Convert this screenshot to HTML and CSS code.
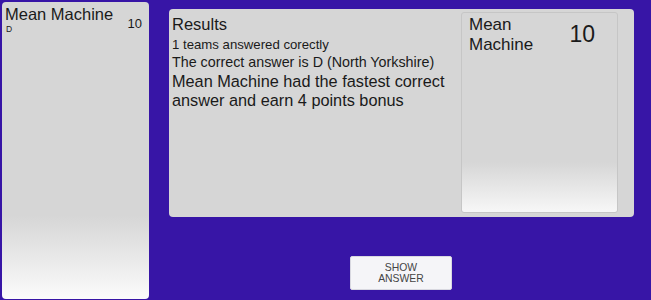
FILE: index.html
```html
<!DOCTYPE html>
<html>
<head>
<meta charset="utf-8">
<link rel="stylesheet" href="styles.css">
</head>
<body>
<div class="page">
  <div class="team-panel">
    <div class="team-row">
      <div class="team-info">
        <div class="team-name">Mean Machine</div>
        <div class="team-answer">D</div>
      </div>
      <div class="team-score">10</div>
    </div>
  </div>
  <div class="right">
    <div class="results-panel">
      <div class="results-text">
        <div class="results-title">Results</div>
        <div class="results-count">1 teams answered corectly</div>
        <div class="results-answer">The correct answer is D (North Yorkshire)</div>
        <div class="results-bonus">Mean Machine had the fastest correct answer and earn 4 points bonus</div>
      </div>
      <div class="score-card">
        <div class="card-name">Mean Machine</div>
        <div class="card-score">10</div>
      </div>
    </div>
    <div class="actions">
      <button class="show-btn">SHOW<br>ANSWER</button>
    </div>
  </div>
</div>
</body>
</html>
```
FILE: styles.css
```css
html, body {
  margin: 0;
  padding: 0;
}
body {
  background: #3715a6;
  width: 651px;
  height: 300px;
  overflow: hidden;
  font-family: "Liberation Sans", Arial, sans-serif;
  color: #1a1a1a;
}
.page {
  display: flex;
  align-items: flex-start;
}
.team-panel {
  margin: 2px 0 0 2px;
  width: 147px;
  height: 297px;
  box-sizing: border-box;
  border-radius: 4px;
  background: linear-gradient(to bottom, #d6d6d6 0%, #d6d6d6 72%, #fbfbfb 100%);
  padding: 3px 7px 0 3px;
}
.team-row {
  display: flex;
  justify-content: space-between;
}
.team-name {
  font-size: 16.5px;
  line-height: 19px;
}
.team-answer {
  font-size: 8.5px;
  line-height: 10px;
  margin-left: 1px;
}
.team-score {
  font-size: 13px;
  line-height: 15px;
  margin-top: 11px;
}
.right {
  margin-left: 20px;
  display: flex;
  flex-direction: column;
}
.results-panel {
  margin-top: 9px;
  width: 465px;
  height: 208px;
  box-sizing: border-box;
  background: #d6d6d6;
  border-radius: 4px;
  display: flex;
  padding: 3px 16px 4px 3px;
}
.results-text {
  flex: 1;
  padding-top: 3px;
}
.results-title {
  font-size: 16.5px;
  line-height: 19px;
}
.results-count {
  font-size: 13.2px;
  line-height: 15px;
  margin-top: 3px;
}
.results-answer {
  font-size: 14.3px;
  line-height: 17px;
  margin-top: 2px;
}
.results-bonus {
  font-size: 16.3px;
  line-height: 19px;
  margin-top: 1px;
  width: 285px;
}
.score-card {
  width: 157px;
  box-sizing: border-box;
  border: 1px solid #c6c6c6;
  border-radius: 3px;
  background: linear-gradient(to bottom, #d6d6d6 0%, #d6d6d6 75%, #f7f7f7 100%);
  display: flex;
  justify-content: space-between;
  padding: 2px 22px 0 7px;
}
.card-name {
  font-size: 17px;
  line-height: 20px;
  width: 70px;
}
.card-score {
  font-size: 23px;
  line-height: 26px;
  margin-top: 6px;
}
.actions {
  margin-top: 39px;
  padding-left: 181px;
}
.show-btn {
  width: 102px;
  height: 34px;
  box-sizing: border-box;
  background: #f5f5f8;
  border: 1px solid #d8d8e0;
  border-radius: 2px;
  font-family: "Liberation Sans", Arial, sans-serif;
  font-size: 10.4px;
  line-height: 11px;
  color: #444;
  padding: 0;
}
```
